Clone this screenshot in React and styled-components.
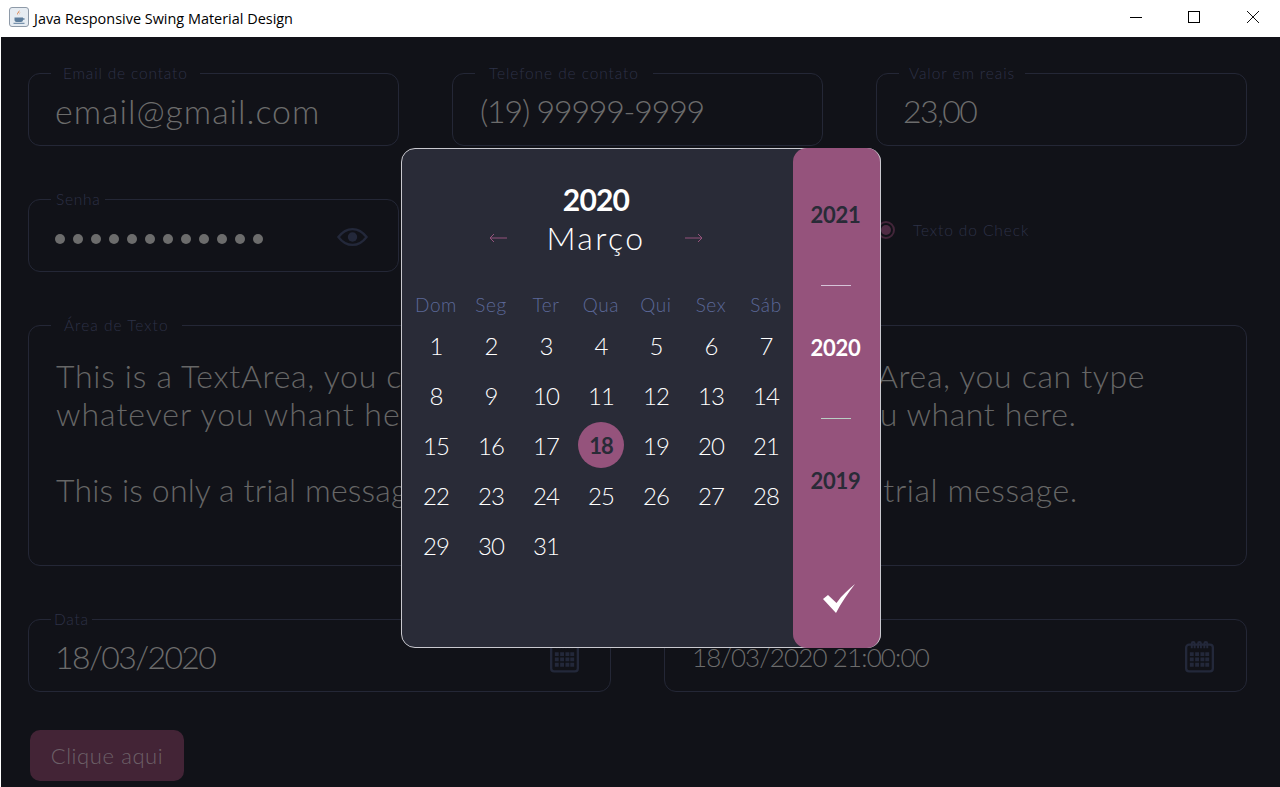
import React from "react";
import styled, { createGlobalStyle } from "styled-components";

const FONT = `"Lato", "Open Sans", sans-serif`;

const Global = createGlobalStyle`
  html, body { margin: 0; padding: 0; background: #fff; overflow: hidden; }
  * { box-sizing: border-box; }
`;

const Win = styled.div`
  position: relative;
  width: 1280px;
  height: 787px;
  display: flex;
  flex-direction: column;
  overflow: hidden;
  font-family: ${FONT};
`;

const TitleBar = styled.header`
  height: 37px;
  flex: none;
  background: #fff;
  display: flex;
  align-items: center;
  padding-left: 9px;
`;
const IconBox = styled.span`
  display: flex;
  margin-top: -3px;
`;
const TitleText = styled.span`
  font: 400 14.45px "Open Sans", sans-serif;
  color: #000;
  margin: -1px 0 0 5px;
  flex: 1;
`;
const WinButtons = styled.div`
  display: flex;
  margin-right: -3px;
  align-self: flex-start;
`;
const WinBtn = styled.div`
  width: ${(p) => (p.$wide ? 60 : 58)}px;
  height: 34px;
  display: flex;
  align-items: center;
  justify-content: center;
`;

const Content = styled.main`
  flex: 1;
  margin-left: 1px;
  background: #111218;
  padding: 36px 33px 0 27px;
  display: flex;
  flex-direction: column;
  gap: 53px;
`;
const Row = styled.div`
  display: grid;
  grid-template-columns: repeat(${(p) => p.$cols}, 1fr);
  gap: 53px;
`;

const Field = styled.div`
  position: relative;
  height: ${(p) => p.$h || 73}px;
  border: 1px solid #242736;
  border-radius: 12px;
  display: flex;
  align-items: center;
  justify-content: space-between;
  padding: 0 ${(p) => p.$pr || 26}px 0 ${(p) => p.$pl || 26}px;
`;
const Legend = styled.span`
  position: absolute;
  top: -10px;
  left: 22px;
  padding: 0 ${(p) => p.$pad}px;
  background: #111218;
  color: #2d3147;
  font-size: 15.5px;
  line-height: 18px;
  font-weight: 300;
  letter-spacing: ${(p) => p.$ls || 0.6}px;
  white-space: nowrap;
`;
const Value = styled.span`
  font-size: ${(p) => p.$size || 32}px;
  font-weight: 300;
  color: #6c6c6c;
  letter-spacing: ${(p) => p.$ls || 0}px;
  white-space: nowrap;
  margin-top: ${(p) => p.$mt || 2}px;
`;
const Dots = styled.div`
  display: flex;
  gap: 8px;
  margin-top: 6px;
`;
const Dot = styled.i`
  width: 10px;
  height: 10px;
  border-radius: 50%;
  background: #6c6c6c;
`;

const CheckRow = styled.div`
  display: flex;
  align-items: center;
  gap: 18px;
  padding: 0 0 12px 1px;
`;
const Radio = styled.span`
  width: 18px;
  height: 18px;
  flex: none;
  border-radius: 50%;
  border: 2px solid #43263a;
  display: flex;
  align-items: center;
  justify-content: center;
  &::after {
    content: "";
    width: 10px;
    height: 10px;
    border-radius: 50%;
    background: #4e2b43;
  }
`;
const CheckText = styled.span`
  font-size: 15.5px;
  font-weight: 300;
  color: #2d3147;
  letter-spacing: 0.9px;
`;

const AreaCol = styled.div`
  flex: none;
  width: ${(p) => p.$w}px;
  align-self: flex-start;
  padding-top: 31px;
`;
const AreaLine = styled.div`
  height: 38px;
  font-size: 32px;
  font-weight: 300;
  line-height: 38px;
  color: #666;
  letter-spacing: ${(p) => p.$ls || 0}px;
  padding-left: ${(p) => p.$dx || 0}px;
  white-space: pre;
`;

const Button = styled.button`
  width: 154px;
  height: 51px;
  margin: -15px 0 0 2px;
  border: 0;
  border-radius: 10px;
  background: #432436;
  color: #6d6068;
  font: 300 22px ${FONT};
  letter-spacing: 0.6px;
  flex: none;
`;

const Modal = styled.section`
  position: absolute;
  left: 401px;
  top: 148px;
  width: 480px;
  height: 500px;
  background: #292b37;
  border: 1px solid #c9c9cf;
  border-radius: 14px;
  display: flex;
`;
const CalPane = styled.div`
  flex: 1;
  min-width: 0;
  display: flex;
  flex-direction: column;
  align-items: center;
  padding: 32px 3px 0 0;
`;
const Year = styled.div`
  font-size: 30px;
  line-height: 36px;
  font-weight: 700;
  color: #fff;
  letter-spacing: -0.8px;
`;
const MonthRow = styled.div`
  display: flex;
  align-items: center;
  justify-content: space-between;
  width: 214px;
  margin-top: 1px;
`;
const Month = styled.div`
  font-size: 32px;
  line-height: 40px;
  font-weight: 300;
  color: #fff;
  letter-spacing: 2.4px;
`;
const Arrow = styled.svg`
  width: 18px;
  height: 10px;
`;
const Grid = styled.div`
  display: grid;
  grid-template-columns: repeat(7, 55px);
  grid-template-rows: 41px;
  grid-auto-rows: 50px;
  margin: 21px 0 0 10px;
`;
const Week = styled.div`
  display: flex;
  align-items: center;
  justify-content: center;
  padding-top: 9px;
  font-size: 19px;
  font-weight: 300;
  letter-spacing: 0.6px;
  color: #5b6897;
`;
const Day = styled.div`
  display: flex;
  align-items: center;
  justify-content: center;
  font-size: 24px;
  font-weight: 300;
  letter-spacing: -1px;
  color: #fff;
`;
const Today = styled.div`
  width: 46px;
  height: 46px;
  border-radius: 50%;
  background: #95537c;
  color: #292b37;
  font-size: 22px;
  font-weight: 700;
  letter-spacing: -1px;
  display: flex;
  align-items: center;
  justify-content: center;
`;
const Side = styled.aside`
  flex: none;
  width: 88px;
  margin: -1px -1px -1px 0;
  border-right: 1px solid #c9c9cf;
  background: #95537c;
  border-radius: 14px;
  display: flex;
  flex-direction: column;
  align-items: center;
  padding-top: 54px;
`;
const SideYear = styled.div`
  height: 28px;
  line-height: 26px;
  margin-left: -2px;
  font-size: 22px;
  font-weight: 700;
  letter-spacing: -0.3px;
  color: ${(p) => (p.$on ? "#fff" : "#292b37")};
`;
const Rule = styled.div`
  width: 30px;
  height: 1px;
  background: ${(p) => p.$c};
  margin: 55px 0 49px -2px;
`;
const CheckBtn = styled.svg`
  width: 34px;
  height: 31px;
  margin: 87px 0 0 5px;
`;

const WEEK = ["Dom", "Seg", "Ter", "Qua", "Qui", "Sex", "Sáb"];
const DAYS = Array.from({ length: 31 }, (_, i) => i + 1);

const EyeSvg = styled.svg`
  margin-top: 2px;
  flex: none;
`;
const Eye = () => (
  <EyeSvg width="31" height="20" viewBox="0 0 33 20" fill="none">
    <path d="M1.5 10C6 4 11 1.5 16.5 1.5S27 4 31.5 10C27 16 22 18.5 16.5 18.5S6 16 1.5 10Z" stroke="#23283a" strokeWidth="2.4" />
    <circle cx="16.5" cy="10" r="5" fill="#23283a" />
  </EyeSvg>
);

const CalendarSvg = styled.svg`
  margin-top: 1px;
  flex: none;
`;
const Calendar = () => (
  <CalendarSvg width="29" height="33" viewBox="0 0 30 33" fill="none">
    <rect x="1.2" y="4.2" width="27.6" height="27.6" rx="3" stroke="#23283a" strokeWidth="2.4" />
    <path d="M7 8V3a1.5 1.5 0 0 1 3 0v5M13.5 8V3a1.5 1.5 0 0 1 3 0v5M20 8V3a1.5 1.5 0 0 1 3 0v5" stroke="#23283a" strokeWidth="2" />
    <path fill="#23283a" d="M5 12h4v4H5zM10.5 12h4v4h-4zM16 12h4v4h-4zM21 12h4v4h-4zM5 17.5h4v4H5zM10.5 17.5h4v4h-4zM16 17.5h4v4h-4zM21 17.5h4v4h-4zM5 23h4v4H5zM10.5 23h4v4h-4zM16 23h4v4h-4zM21 23h4v4h-4z" />
  </CalendarSvg>
);

const JavaIcon = () => (
  <svg width="20" height="20" viewBox="0 0 20 20">
    <rect x="0.5" y="0.5" width="19" height="19" rx="2.5" fill="#e6ecf2" stroke="#8e9aa8" />
    <path d="M10 3c1.5 2-2 3-1 5 .4.8 1 1 1 1-1.2-.6-2.4-2-1.2-3.4C9.700 4.500 10.300 4 10 3Z" fill="#d9671f" />
    <path d="M12 5c-1.500 1-2.400 1.700-1.400 3-.9-.8-1-2 1.400-3Z" fill="#d9671f" />
    <path d="M5.500 10.500h8.500v2.500c0 1.200-1 2-2 2H7.500c-1 0-2-.8-2-2zM14 11.200h1.500v1.600H14z" fill="#5d7d9c" />
    <path d="M4.500 16.300h11" stroke="#5d7d9c" />
  </svg>
);

export default function App() {
  return (
    <Win>
      <Global />
      <TitleBar>
        <IconBox><JavaIcon /></IconBox>
        <TitleText>Java Responsive Swing Material Design</TitleText>
        <WinButtons>
          <WinBtn>
            <svg width="12" height="1" viewBox="0 0 12 1"><path d="M0 .5h12" stroke="#000" /></svg>
          </WinBtn>
          <WinBtn>
            <svg width="12" height="12" viewBox="0 0 12 12"><rect x=".5" y=".5" width="11" height="11" fill="none" stroke="#000" /></svg>
          </WinBtn>
          <WinBtn $wide>
            <svg width="12" height="12" viewBox="0 0 12 12"><path d="M0 0l12 12M12 0L0 12" stroke="#111" /></svg>
          </WinBtn>
        </WinButtons>
      </TitleBar>
      <Content>
        <Row $cols={3}>
          <Field>
            <Legend $pad={12} $ls={0.82}>Email de contato</Legend>
            <Value $size={34} $ls={0.95}>email@gmail.com</Value>
          </Field>
          <Field $pl={27}>
            <Legend $pad={14} $ls={0.9}>Telefone de contato</Legend>
            <Value $ls={-1.15}>(19) 99999-9999</Value>
          </Field>
          <Field>
            <Legend $pad={10} $ls={0.9}>Valor em reais</Legend>
            <Value $ls={-1.6}>23,00</Value>
          </Field>
        </Row>
        <Row $cols={3}>
          <Field $pr={30}>
            <Legend $pad={5} $ls={0.7}>Senha</Legend>
            <Dots>
              {Array.from({ length: 12 }, (_, i) => <Dot key={i} />)}
            </Dots>
            <Eye />
          </Field>
          <div />
          <CheckRow>
            <Radio />
            <CheckText>Texto do Check</CheckText>
          </CheckRow>
        </Row>
        <Field $h={241}>
          <Legend $pad={13} $ls={1}>Área de Texto</Legend>
          <AreaCol $w={634}>
            <AreaLine $ls={0.72} $dx={1}>This is a TextArea, you can type</AreaLine>
            <AreaLine $ls={1} $dx={1}>whatever you whant here.</AreaLine>
            <AreaLine />
            <AreaLine $ls={0.15} $dx={1}>This is only a trial message.</AreaLine>
          </AreaCol>
          <AreaCol $w={531}>
            <AreaLine $ls={0.65} $dx={4}>This is a TextArea, you can type</AreaLine>
            <AreaLine $ls={0.6} $dx={15}>whatever you whant here.</AreaLine>
            <AreaLine />
            <AreaLine $ls={0.6}>This is only a trial message.</AreaLine>
          </AreaCol>
        </Field>
        <Row $cols={2}>
          <Field $pr={31}>
            <Legend $pad={3} $ls={0.7}>Data</Legend>
            <Value $ls={-1.6}>18/03/2020</Value>
            <Calendar />
          </Field>
          <Field $pl={27} $pr={32}>
            <Value $size={26} $ls={-0.86}>18/03/2020 21:00:00</Value>
            <Calendar />
          </Field>
        </Row>
        <Button>Clique aqui</Button>
      </Content>
      <Modal>
        <CalPane>
          <Year>2020</Year>
          <MonthRow>
            <Arrow viewBox="0 0 18 10"><path d="M18 5H1M5 1L1 5l4 4" fill="none" stroke="#95537c" /></Arrow>
            <Month>Março</Month>
            <Arrow viewBox="0 0 18 10"><path d="M0 5h17M13 1l4 4-4 4" fill="none" stroke="#95537c" /></Arrow>
          </MonthRow>
          <Grid>
            {WEEK.map((w) => <Week key={w}>{w}</Week>)}
            {DAYS.map((d) => (
              <Day key={d}>{d === 18 ? <Today>{d}</Today> : d}</Day>
            ))}
          </Grid>
        </CalPane>
        <Side>
          <SideYear>2021</SideYear>
          <Rule $c="#d6c3d8" />
          <SideYear $on>2020</SideYear>
          <Rule $c="#b9cfc4" />
          <SideYear>2019</SideYear>
          <CheckBtn viewBox="0 0 34 31">
            <path d="M1 16L6 12L14.500 20C20 12 27 6 33 1C26 10 19 20 14 30Z" fill="#fff" />
          </CheckBtn>
        </Side>
      </Modal>
    </Win>
  );
}
